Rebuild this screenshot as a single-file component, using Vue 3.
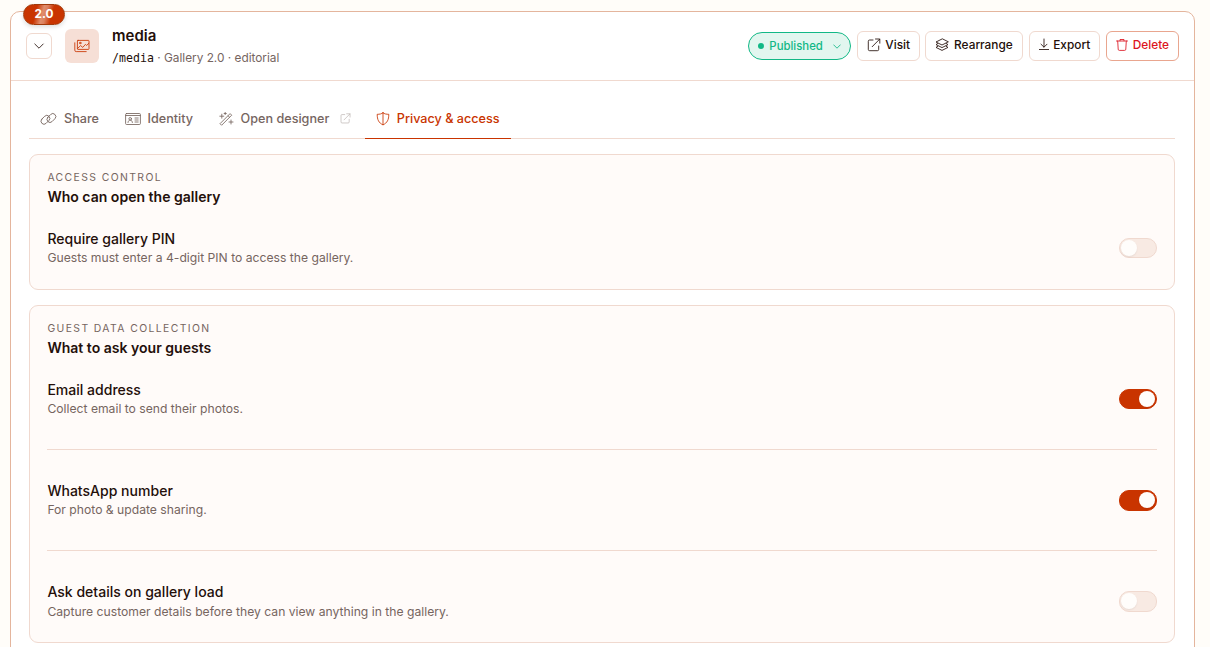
<script setup>
import { ref } from 'vue'

const tabs = [
  { id: 'share', label: 'Share' },
  { id: 'identity', label: 'Identity' },
  { id: 'designer', label: 'Open designer', external: true },
  { id: 'privacy', label: 'Privacy & access' },
]
const active = ref('privacy')

const panels = ref([
  {
    id: 'access',
    eyebrow: 'Access control',
    title: 'Who can open the gallery',
    rows: [
      { label: 'Require gallery PIN', hint: 'Guests must enter a 4-digit PIN to access the gallery.', on: false },
    ],
  },
  {
    id: 'guest',
    eyebrow: 'Guest data collection',
    title: 'What to ask your guests',
    rows: [
      { label: 'Email address', hint: 'Collect email to send their photos.', on: true },
      { label: 'WhatsApp number', hint: 'For photo & update sharing.', on: true },
      { label: 'Ask details on gallery load', hint: 'Capture customer details before they can view anything in the gallery.', on: false },
    ],
  },
])
</script>

<template>
  <main class="page">
    <article class="gallery">
      <span class="version">2.0</span>
      <header class="head">
        <button class="toggle" aria-label="Collapse">
          <svg width="12" height="12" viewBox="0 0 12 12"><path d="M1.8 4 6 8.2 10.2 4" /></svg>
        </button>
        <span class="thumb">
          <svg width="16" height="14" viewBox="0 0 16 14">
            <rect x="3.4" y="1.4" width="11.6" height="9" rx=".6" />
            <path d="M.8 3.8v7.4a1.4 1.4 0 0 0 1.4 1.4h10M3.6 9.4 6.6 6.6l2.2 1.8 2.6-3 1.2 1 2.2-2" />
            <circle cx="6.2" cy="4" r=".8" />
          </svg>
        </span>
        <div class="names">
          <h1>media</h1>
          <p><code>/media</code> · Gallery 2.0 · editorial</p>
        </div>
        <div class="actions">
          <button class="status">
            <i class="dot"></i>Published
            <svg width="8" height="8" viewBox="0 0 8 8"><path d="M.7 2.9 4 6.2l3.3-3.3" /></svg>
          </button>
          <button class="btn">
            <svg width="14" height="14" viewBox="0 0 14 14"><path d="M6 2H2.6a1.3 1.3 0 0 0-1.3 1.3v8.1a1.3 1.3 0 0 0 1.3 1.3h7.8a1.3 1.3 0 0 0 1.3-1.3V8M8.5 1h4.3v4.2M12.6 1.2 5.2 8.7" /></svg>
            <span>Visit</span>
          </button>
          <button class="btn rearrange">
            <svg width="14" height="14" viewBox="0 0 14 14"><path d="M7 1 1 4l6 3 6-3ZM2.8 5.5 1 6.6l6 3 6-3-1.8-1.1M2.8 8.3 1 9.4l6 3 6-3-1.8-1.1" /></svg>
            <span>Rearrange</span>
          </button>
          <button class="btn export">
            <svg width="10" height="14" viewBox="0 0 10 14"><path d="M5 1v8M2 6.2l3 3 3-3M.3 11.5h9.4" /></svg>
            <span>Export</span>
          </button>
          <button class="btn danger">
            <svg width="12" height="14" viewBox="0 0 12 14"><path d="M.5 3h11M4 2.8V1.5h4v1.3M1.7 3l.5 8.2a1.2 1.2 0 0 0 1.2 1.2h5.2a1.2 1.2 0 0 0 1.2-1.2L10.3 3" /></svg>
            <span>Delete</span>
          </button>
        </div>
      </header>

      <div class="body">
        <nav class="tabs">
          <button v-for="t in tabs" :key="t.id" class="tab" :class="[t.id, { active: active === t.id }]" @click="active = t.id">
            <svg v-if="t.id === 'share'" width="17" height="14" viewBox="0 0 17 14"><rect x=".4" y="4.8" width="10" height="6" rx="3" transform="rotate(-45 5.4 7.8)" /><rect x="6.4" y="3" width="10" height="6" rx="3" transform="rotate(-45 11.4 6)" /></svg>
            <svg v-else-if="t.id === 'identity'" width="16" height="14" viewBox="0 0 16 14"><rect x=".6" y="1.5" width="14.8" height="11" rx="1" /><path d="M.8 3.5h14.4M10 6h3.2M10 8h3.2M10 10h3.2M3 10.5c.2-1.7 1-2.3 2.2-2.3s2 .6 2.2 2.3" /><circle cx="5.2" cy="6.8" r="1.3" /></svg>
            <svg v-else-if="t.id === 'designer'" width="15" height="14" viewBox="0 0 15 14"><path d="m1.3 11.4 9.8-9.8 1.6 1.6L2.9 13ZM9 3.7l1.6 1.6M2.8 2.2v4M.8 4.2h4M6.2.4v2.2M5.1 1.5h2.2M12 8v4M10 10h4" /></svg>
            <svg v-else width="14" height="14" viewBox="0 0 14 14"><path d="M7 .8C5.5 2 3.5 2.3 1.2 2.3c0 5.4 1.5 8.5 5.8 10.6 4.3-2.1 5.8-5.2 5.8-10.6C10.5 2.3 8.5 2 7 .8ZM7 1v11.7" /></svg>
            <span>{{ t.label }}</span>
            <svg v-if="t.external" class="ext" width="11" height="11" viewBox="0 0 14 14"><path d="M6 2H2.6a1.3 1.3 0 0 0-1.3 1.3v8.1a1.3 1.3 0 0 0 1.3 1.3h7.8a1.3 1.3 0 0 0 1.3-1.3V8M8.5 1h4.3v4.2M12.6 1.2 5.2 8.7" /></svg>
          </button>
        </nav>

        <section v-for="p in panels" :key="p.id" class="panel">
          <p class="eyebrow">{{ p.eyebrow }}</p>
          <h2>{{ p.title }}</h2>
          <div v-for="r in p.rows" :key="r.label" class="row">
            <div>
              <h3>{{ r.label }}</h3>
              <p class="hint">{{ r.hint }}</p>
            </div>
            <button class="switch" :class="{ on: r.on }" role="switch" :aria-checked="r.on" :aria-label="r.label" @click="r.on = !r.on"><i></i></button>
          </div>
        </section>
      </div>
    </article>
  </main>
</template>

<style>
html, body { overflow: hidden; background: #fffdf9; }
</style>

<style scoped>
* { box-sizing: border-box; }
h1, h2, h3, p { margin: 0; }
button { font: inherit; color: inherit; padding: 0; background: none; border: 0; }
svg { fill: none; stroke: currentColor; stroke-width: .85; stroke-linecap: round; stroke-linejoin: round; flex: none; }
.page { height: 647px; overflow: hidden; padding: 11px 15px 0 10px; font-family: Inter, "Liberation Sans", sans-serif; color: #240f0a; }
.gallery { position: relative; height: 680px; border: 1px solid #e4b59d; border-radius: 10px; background: #fff; }
.version { position: absolute; left: 12px; top: -8px; width: 42px; height: 21px; border: 1px solid #a13a0b; border-radius: 11px; background: linear-gradient(105deg, #c93400 30%, #e08d6c 46%, #dc805d 54%, #c93400 68%); color: #fff; font-size: 11.8px; line-height: 18px; font-weight: 700; text-align: center; box-shadow: 0 2px 4px #0002; }
.head { display: flex; align-items: center; height: 69px; padding: 0 15px; border-bottom: 1px solid #f0d9cf; }
.toggle { display: flex; align-items: center; justify-content: center; width: 26px; height: 26px; border: 1px solid #f0d9cf; border-radius: 6px; }
.thumb { display: flex; align-items: center; justify-content: center; width: 34px; height: 34px; margin-left: 13px; border-radius: 6px; background: #f6dfd6; color: #c93400; }
.names { margin-left: 13px; }
h1 { padding-top: 1px; font-size: 15px; line-height: 20px; font-weight: 600; }
.names p { margin-top: 3px; font-size: 11.84px; line-height: 18px; color: #76655f; }
code { font-family: "DejaVu Sans Mono", monospace; font-size: 11.6px; line-height: 1; color: #240f0a; }
.actions { display: flex; align-items: center; gap: 6px; margin-left: auto; font-size: 11.84px; font-weight: 500; }
.status { display: flex; align-items: center; width: 103px; height: 28px; padding: 0 9px; border: 1px solid #12b886; border-radius: 14px; background: #e2f6ef; color: #12b886; font-size: 11.36px; }
.dot { width: 6px; height: 6px; margin-right: 5px; border-radius: 50%; background: #12b886; }
.status svg { margin-left: auto; }
.btn { display: flex; align-items: center; gap: 4px; height: 30px; padding: 0 9px 2px; border: 1px solid #f0d9cf; border-radius: 6px; }
.btn span { padding-bottom: 1px; }
.rearrange { gap: 5px; margin-left: -1px; }
.export, .danger { gap: 4.5px; }
.danger { border-color: #e9a68f; color: #dc1420; }
.body { padding: 18px 19px 0 18px; }
.tabs { display: flex; gap: 4px; height: 40px; border-bottom: 1px solid #f0d9cf; }
.tab { display: flex; align-items: center; gap: 6.5px; height: 40px; padding: 0 11px; font-size: 12.64px; font-weight: 500; color: #76655f; border-bottom: 1px solid transparent; }
.tab.share { gap: 7px; }
.tab.privacy { margin-left: -.5px; }
.tab span { padding-bottom: 1px; }
.tab.active { color: #c93400; border-color: #c93400; }
.ext { margin-left: 4px; opacity: .5; }
.panel { margin-top: 15px; padding: 15px 17px 0 17.4px; border: 1px solid #f0d9cf; border-radius: 9px; background: #fffbf9; height: 136px; }
.panel + .panel { height: 338px; }
.eyebrow { font-size: 10.4px; line-height: 16px; letter-spacing: 1.4px; text-transform: uppercase; color: #76655f; }
h2 { margin: 1px 0; font-size: 14.04px; line-height: 20px; font-weight: 600; }
.row { display: flex; align-items: center; justify-content: space-between; height: 81px; padding-bottom: 2px; }
.row:not(:last-child) { margin-bottom: 9px; }
.row + .row { height: 101px; padding: 0 0 1px; border-top: 1px solid #f0d9cf; }
.row + .row:not(:last-child) { margin-bottom: 0; }
.row + .row:last-child h3 { padding-top: 2px; }
.row + .row:last-child .hint { padding-top: 1px; }
h3 { font-size: 14.04px; line-height: 20px; font-weight: 500; }
.hint { font-size: 12.17px; line-height: 18px; color: #76655f; }
.switch { width: 38px; height: 20px; padding: 1px; border: 1px solid #f0d9cf; border-radius: 10px; background: #f8eae3; }
.row + .row .switch { height: 21px; padding-top: 1.5px; margin-top: 1px; }
.switch i { display: block; width: 16px; height: 16px; border-radius: 50%; background: #fffdfb; box-shadow: 0 1px 2px #0001; }
.switch.on { background: #c93400; border-color: #c93400; }
.switch.on i { margin-left: 18px; }
</style>
